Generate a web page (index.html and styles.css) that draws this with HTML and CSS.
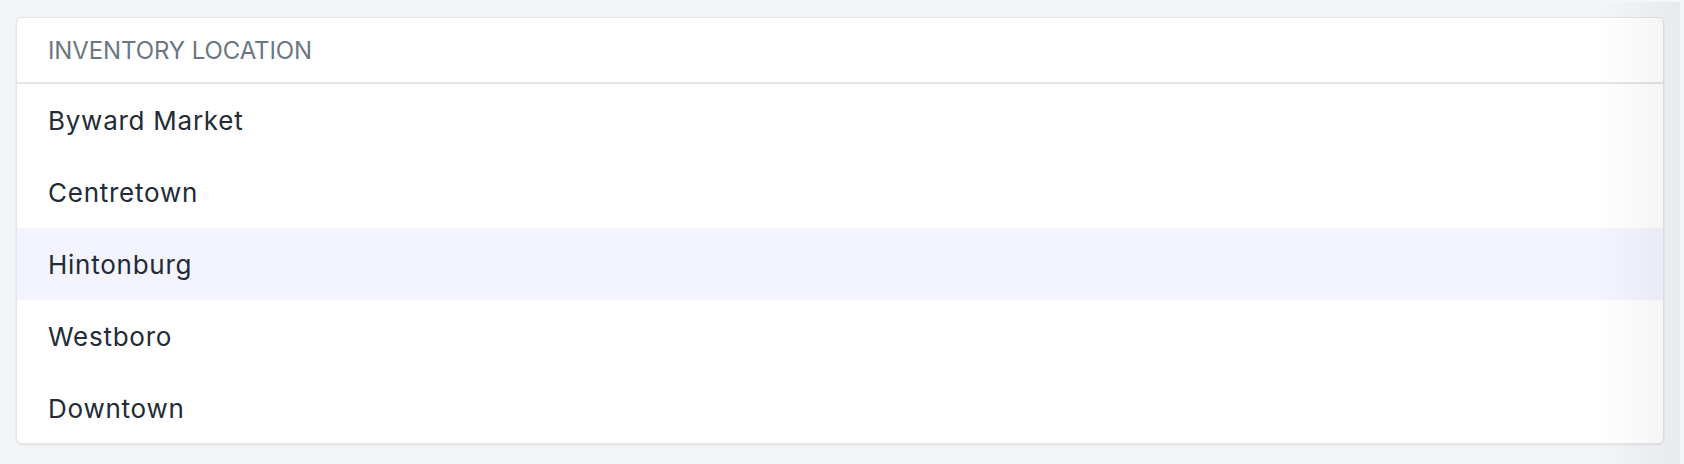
FILE: index.html
```html
<!DOCTYPE html>
<html lang="en">
<head>
<meta charset="utf-8">
<title>Inventory location</title>
<link rel="stylesheet" href="styles.css">
</head>
<body>
<div class="page">
  <div class="card">
    <div class="card-header">INVENTORY LOCATION</div>
    <ul class="list">
      <li class="item">Byward Market</li>
      <li class="item">Centretown</li>
      <li class="item item-active">Hintonburg</li>
      <li class="item">Westboro</li>
      <li class="item">Downtown</li>
    </ul>
  </div>
  <div class="scroll-shadow"></div>
</div>
</body>
</html>
```
FILE: styles.css
```css
html, body {
  margin: 0;
  padding: 0;
  background: #f4f5f7;
  font-family: Inter, "Noto Sans", "Liberation Sans", sans-serif;
}
.page {
  position: relative;
  height: 464px;
  padding: 17px 20px 0 16px;
  box-sizing: border-box;
}
.card {
  background: #ffffff;
  border: 1px solid #e3e5e9;
  border-radius: 6px;
  box-shadow: 0 1px 3px rgba(0, 0, 0, 0.08);
  overflow: hidden;
  box-sizing: border-box;
  height: 427px;
}
.card-header {
  height: 64px;
  display: flex;
  align-items: center;
  padding-left: 31px;
  border-bottom: 2px solid #e2e5e9;
  color: #6b7684;
  font-size: 24px;
  letter-spacing: -0.1px;
}
.list {
  list-style: none;
  margin: 0;
  padding: 0;
}
.item {
  height: 72px;
  display: flex;
  align-items: center;
  padding-left: 31px;
  color: #222b36;
  font-size: 26px;
  letter-spacing: 0.75px;
}
.item-active {
  background: #f3f4fd;
}
.scroll-shadow {
  position: absolute;
  top: 2px;
  bottom: 0;
  right: 4px;
  width: 84px;
  background: linear-gradient(to right, rgba(0, 0, 0, 0), rgba(40, 45, 60, 0.06));
  pointer-events: none;
}
```
